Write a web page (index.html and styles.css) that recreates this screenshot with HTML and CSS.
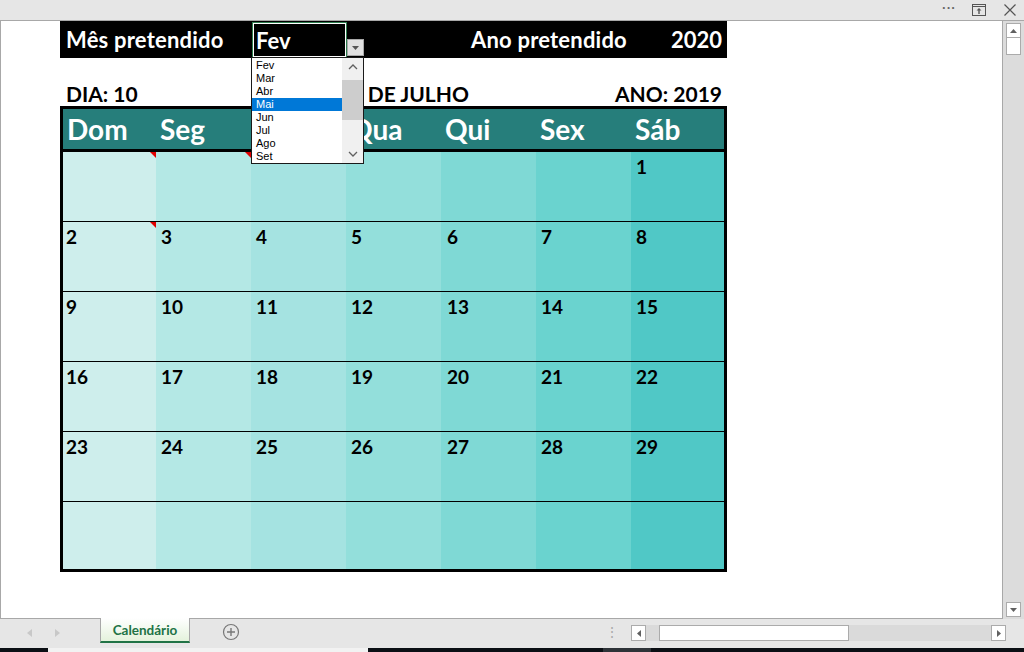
FILE: index.html
```html
<!DOCTYPE html>
<html lang="pt">
<head>
<meta charset="utf-8">
<title>Calendário</title>
<link rel="stylesheet" href="styles.css">
</head>
<body>
<div class="app">
  <div class="titlebar">
    <span class="tb-dots">···</span>
    <svg class="tb-restore" width="14" height="12" viewBox="0 0 14 12"><rect x="0.5" y="0.5" width="13" height="11" fill="none" stroke="#555"/><line x1="0.5" y1="2.5" x2="13.5" y2="2.5" stroke="#555"/><path d="M7 4 L4.5 6.5 H6.3 V10 H7.7 V6.5 H9.5 Z" fill="#555"/></svg>
    <svg class="tb-close" width="12" height="12" viewBox="0 0 12 12"><path d="M0.5 0.5 L11.5 11.5 M11.5 0.5 L0.5 11.5" stroke="#555" stroke-width="1.2"/></svg>
  </div>
  <div class="main">
    <div class="sheet">
      <div class="topband">
        <span class="lbl-mes">Mês pretendido</span>
        <div class="cell-sel">Fev</div>
        <span class="lbl-ano">Ano pretendido</span>
        <span class="val-ano">2020</span>
        <div class="dd-btn"><svg width="7" height="4" viewBox="0 0 7 4"><path d="M0 0 H7 L3.5 4 Z" fill="#555"/></svg></div>
        <div class="dd-list">
          <div class="dd-items">
            <div class="dd-item">Fev</div>
            <div class="dd-item">Mar</div>
            <div class="dd-item">Abr</div>
            <div class="dd-item sel">Mai</div>
            <div class="dd-item">Jun</div>
            <div class="dd-item">Jul</div>
            <div class="dd-item">Ago</div>
            <div class="dd-item">Set</div>
          </div>
          <div class="dd-scroll">
            <svg class="chev" width="10" height="6" viewBox="0 0 10 6"><path d="M1 5 L5 1 L9 5" fill="none" stroke="#606060" stroke-width="1.3"/></svg>
            <div class="dd-thumb"></div>
            <svg class="chev chev-down" width="10" height="6" viewBox="0 0 10 6"><path d="M1 1 L5 5 L9 1" fill="none" stroke="#606060" stroke-width="1.3"/></svg>
          </div>
        </div>
      </div>
      <div class="inforow">
        <span class="info-dia">DIA: 10</span>
        <span class="info-mes">DE JULHO</span>
        <span class="info-ano">ANO: 2019</span>
      </div>
      <div class="cal">
        <div class="cal-head">
          <div class="h">Dom</div><div class="h">Seg</div><div class="h">Ter</div><div class="h">Qua</div><div class="h">Qui</div><div class="h">Sex</div><div class="h">Sáb</div>
        </div>
        <div class="cal-body">
          <div class="row">
            <div class="d c1"><i class="note"></i></div><div class="d c2"><i class="note"></i></div><div class="d c3"></div><div class="d c4"></div><div class="d c5"></div><div class="d c6"></div><div class="d c7">1</div>
          </div>
          <div class="row">
            <div class="d c1">2<i class="note"></i></div><div class="d c2">3</div><div class="d c3">4</div><div class="d c4">5</div><div class="d c5">6</div><div class="d c6">7</div><div class="d c7">8</div>
          </div>
          <div class="row">
            <div class="d c1">9</div><div class="d c2">10</div><div class="d c3">11</div><div class="d c4">12</div><div class="d c5">13</div><div class="d c6">14</div><div class="d c7">15</div>
          </div>
          <div class="row">
            <div class="d c1">16</div><div class="d c2">17</div><div class="d c3">18</div><div class="d c4">19</div><div class="d c5">20</div><div class="d c6">21</div><div class="d c7">22</div>
          </div>
          <div class="row">
            <div class="d c1">23</div><div class="d c2">24</div><div class="d c3">25</div><div class="d c4">26</div><div class="d c5">27</div><div class="d c6">28</div><div class="d c7">29</div>
          </div>
          <div class="row last">
            <div class="d c1"></div><div class="d c2"></div><div class="d c3"></div><div class="d c4"></div><div class="d c5"></div><div class="d c6"></div><div class="d c7"></div>
          </div>
        </div>
      </div>
    </div>
    <div class="vscroll">
      <div class="vs-btn"><svg width="7" height="4" viewBox="0 0 7 4"><path d="M0 4 H7 L3.5 0 Z" fill="#606060"/></svg></div>
      <div class="vs-thumb"></div>
      <div class="vs-track"></div>
      <div class="vs-btn"><svg width="7" height="4" viewBox="0 0 7 4"><path d="M0 0 H7 L3.5 4 Z" fill="#606060"/></svg></div>
    </div>
  </div>
  <div class="tabs">
    <div class="tab-nav">
      <svg width="5" height="8" viewBox="0 0 5 8"><path d="M5 0 V8 L0 4 Z" fill="#c8c8c8"/></svg>
      <svg width="5" height="8" viewBox="0 0 5 8"><path d="M0 0 V8 L5 4 Z" fill="#c8c8c8"/></svg>
    </div>
    <div class="tab">Calendário</div>
    <svg class="tab-add" width="18" height="18" viewBox="0 0 18 18"><circle cx="9" cy="9" r="7.5" fill="none" stroke="#777" stroke-width="1.2"/><path d="M9 5 V13 M5 9 H13" stroke="#777" stroke-width="1.4"/></svg>
    <div class="tab-spacer"></div>
    <span class="tab-grip">⋮</span>
    <div class="hscroll">
      <div class="hs-btn"><svg width="4" height="7" viewBox="0 0 4 7"><path d="M4 0 V7 L0 3.5 Z" fill="#606060"/></svg></div>
      <div class="hs-gap"></div>
      <div class="hs-thumb"></div>
      <div class="hs-track"></div>
      <div class="hs-btn"><svg width="4" height="7" viewBox="0 0 4 7"><path d="M0 0 V7 L4 3.5 Z" fill="#606060"/></svg></div>
    </div>
  </div>
  <div class="taskbar">
    <div class="tk-a"></div>
    <div class="tk-b"></div>
    <div class="tk-c"></div>
  </div>
</div>
</body>
</html>
```

FILE: styles.css
```css
* { box-sizing: border-box; }
html, body { margin: 0; padding: 0; }
body {
  width: 1024px;
  height: 652px;
  overflow: hidden;
  font-family: "Lato", "Open Sans", sans-serif;
  background: #e6e6e6;
}
.app {
  width: 1024px;
  height: 652px;
  display: flex;
  flex-direction: column;
}
.titlebar {
  height: 20px;
  flex: none;
  background: #e6e6e6;
  display: flex;
  align-items: center;
  justify-content: flex-end;
  padding-right: 8px;
}
.tb-dots { font-size: 14px; color: #666; letter-spacing: 1px; margin-right: 16px; line-height: 1; position: relative; top: -3px; }
.tb-restore { margin-right: 18px; }
.main {
  height: 599px;
  flex: none;
  display: flex;
  border-top: 1px solid #a8a8a8;
}
.sheet {
  width: 1003px;
  background: #fff;
  border-left: 1px solid #a8a8a8;
  border-right: 1px solid #a8a8a8;
  border-bottom: 1px solid #a8a8a8;
  padding-left: 59px;
}
.topband {
  position: relative;
  width: 667px;
  height: 37px;
  background: #000;
  color: #fff;
  font-weight: 700;
  font-size: 22px;
  display: flex;
  align-items: center;
}
.lbl-mes { margin-left: 6px; width: 186px; letter-spacing: 0.2px; }
.cell-sel {
  width: 95px;
  height: 36px;
  align-self: flex-start;
  margin-top: 1px;
  border: 1px solid #2e7d4f;
  outline: 1px solid #fff;
  outline-offset: -2px;
  padding: 4px 0 0 3px;
}
.lbl-ano { margin-left: 124px; letter-spacing: 0.2px; }
.val-ano { margin-left: auto; margin-right: 5px; }
.dd-btn {
  position: absolute;
  left: 287px;
  top: 18px;
  width: 17px;
  height: 17px;
  background: #e1e1e1;
  border: 1px solid #a8a8a8;
  display: flex;
  align-items: center;
  justify-content: center;
}
.dd-list {
  position: absolute;
  left: 191px;
  top: 36px;
  width: 113px;
  height: 107px;
  background: #fff;
  border: 1px solid #1a1a1a;
  display: flex;
  z-index: 5;
}
.dd-items { flex: 1; padding-top: 1px; }
.dd-item {
  height: 13px;
  line-height: 13px;
  font-size: 11px;
  font-weight: 400;
  color: #000;
  padding-left: 4px;
  font-family: "Liberation Sans", "Open Sans", sans-serif;
}
.dd-item.sel { background: #0078d7; color: #fff; }
.dd-scroll {
  width: 21px;
  background: #f0f0f0;
  display: flex;
  flex-direction: column;
  align-items: center;
}
.chev { margin-top: 6px; flex: none; }
.chev-down { margin-top: auto; margin-bottom: 6px; }
.dd-thumb { width: 21px; height: 40px; margin-top: 10px; background: #cdcdcd; }
.inforow {
  width: 667px;
  height: 48px;
  display: flex;
  align-items: flex-end;
  font-weight: 700;
  font-size: 21px;
  color: #000;
  padding: 0 5px 0 6px;
  line-height: 24px;
}
.info-mes { margin-left: 230px; }
.info-ano { margin-left: auto; }
.cal {
  width: 667px;
  height: 466px;
  border: 3px solid #000;
  display: flex;
  flex-direction: column;
}
.cal-head {
  height: 43px;
  flex: none;
  background: #267e7b;
  border-bottom: 3px solid #000;
  display: grid;
  grid-template-columns: 93px repeat(5, 95px) 93px;
}
.h {
  color: #fff;
  font-weight: 700;
  font-size: 28px;
  padding: 4px 0 0 4px;
  line-height: 32px;
}
.cal-body { flex: 1; display: flex; flex-direction: column; }
.row {
  height: 70px;
  flex: none;
  display: grid;
  grid-template-columns: 93px repeat(5, 95px) 93px;
  border-bottom: 1px solid #000;
}
.row.last { border-bottom: none; flex: 1; }
.d {
  position: relative;
  font-weight: 700;
  font-size: 19px;
  color: #000;
  padding: 3px 0 0 3px;
  line-height: 24px;
}
.c1 { background: #ceeeec; }
.c2 { background: #b4e8e5; padding-left: 5px; }
.c3 { background: #a5e3e1; padding-left: 5px; }
.c4 { background: #93dfdb; padding-left: 5px; }
.c5 { background: #7fd9d5; padding-left: 6px; }
.c6 { background: #6ad3cf; padding-left: 5px; }
.c7 { background: #50c8c6; padding-left: 5px; }
.note {
  position: absolute;
  right: 0;
  top: 0;
  width: 0;
  height: 0;
  border-top: 6px solid #e00000;
  border-left: 6px solid transparent;
}
.vscroll {
  width: 21px;
  background: #dcdcdc;
  display: flex;
  flex-direction: column;
  align-items: center;
  padding-top: 2px;
  padding-bottom: 2px;
}
.vs-btn {
  width: 15px;
  height: 15px;
  flex: none;
  background: #fff;
  border: 1px solid #ababab;
  display: flex;
  align-items: center;
  justify-content: center;
}
.vs-thumb { width: 15px; height: 17px; flex: none; background: #fff; border: 1px solid #ababab; border-top: none; }
.vs-track { flex: 1; }
.tabs {
  height: 29px;
  flex: none;
  background: #e6e6e6;
  display: flex;
  align-items: flex-start;
}
.tab-nav {
  width: 100px;
  display: flex;
  gap: 23px;
  padding: 10px 0 0 27px;
}
.tab {
  width: 90px;
  height: 25px;
  margin-top: -1px;
  background: linear-gradient(#ffffff, #e4f2dc);
  border-left: 1px solid #a8a8a8;
  border-right: 1px solid #a8a8a8;
  border-bottom: 2px solid #217346;
  color: #217346;
  font-weight: 700;
  font-size: 13.5px;
  text-align: center;
  line-height: 24px;
  font-family: "Lato", "Open Sans", sans-serif;
}
.tab-add { margin: 4px 0 0 32px; }
.tab-spacer { flex: 1; }
.tab-grip { color: #aaa; font-size: 14px; margin-top: 5px; margin-right: 12px; line-height: 16px; }
.hscroll {
  width: 375px;
  height: 16px;
  margin-top: 6px;
  margin-right: 18px;
  display: flex;
}
.hs-btn {
  width: 15px;
  height: 16px;
  flex: none;
  background: #fff;
  border: 1px solid #ababab;
  display: flex;
  align-items: center;
  justify-content: center;
}
.hs-gap { width: 13px; background: #dadada; }
.hs-thumb { width: 190px; background: #fff; border: 1px solid #ababab; }
.hs-track { flex: 1; background: #dadada; }
.taskbar {
  flex: 1;
  background: #0b0f14;
  display: flex;
}
.tk-a { width: 48px; }
.tk-b { width: 320px; background: #f2f2f2; }
.tk-c { width: 48px; margin-left: 235px; background: #2e3338; }
```
